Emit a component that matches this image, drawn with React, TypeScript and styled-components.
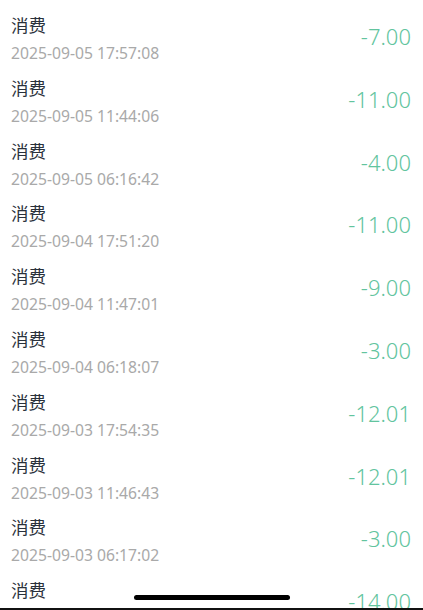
import React from 'react';
import styled, { createGlobalStyle } from 'styled-components';

// Global reset
const GlobalStyle = createGlobalStyle`
  html, body {
    margin: 0;
    padding: 0;
    background: #ffffff;
    overflow: hidden;
  }
  body {
    font-family: "Noto Sans", "Noto Sans CJK SC", sans-serif;
  }
`;

interface Record {
  title: string;
  time: string;
  amount: string;
}

const records: Record[] = [
  { title: '消费', time: '2025-09-05 17:57:08', amount: '-7.00' },
  { title: '消费', time: '2025-09-05 11:44:06', amount: '-11.00' },
  { title: '消费', time: '2025-09-05 06:16:42', amount: '-4.00' },
  { title: '消费', time: '2025-09-04 17:51:20', amount: '-11.00' },
  { title: '消费', time: '2025-09-04 11:47:01', amount: '-9.00' },
  { title: '消费', time: '2025-09-04 06:18:07', amount: '-3.00' },
  { title: '消费', time: '2025-09-03 17:54:35', amount: '-12.01' },
  { title: '消费', time: '2025-09-03 11:46:43', amount: '-12.01' },
  { title: '消费', time: '2025-09-03 06:17:02', amount: '-3.00' },
  { title: '消费', time: '2025-09-02 17:50:11', amount: '-14.00' },
];

// Styled components
const Screen = styled.div`
  position: relative;
  width: 423px;
  height: 610px;
  overflow: hidden;
  background: #ffffff;
`;

const List = styled.ul`
  list-style: none;
  margin: 0;
  padding: 0 11px;
`;

const Row = styled.li`
  display: flex;
  justify-content: space-between;
  align-items: flex-start;
  box-sizing: border-box;
  height: 62.8px;
  padding-top: 13px;
`;

const Info = styled.div`
  display: flex;
  flex-direction: column;
  gap: 6px;
`;

const Title = styled.span`
  font-family: "Noto Sans CJK SC", sans-serif;
  font-size: 17.5px;
  line-height: 24px;
  color: #2a313b;
`;

const Time = styled.span`
  font-size: 15.7px;
  line-height: 21px;
  color: #a9a9a9;
`;

const Amount = styled.span`
  margin-top: 9px;
  margin-right: 1px;
  font-size: 22px;
  font-weight: 300;
  line-height: 28px;
  color: #62c49e;
`;

const HomeIndicator = styled.div`
  position: absolute;
  left: 134px;
  bottom: 10px;
  width: 156px;
  height: 5px;
  border-radius: 3px;
  background: #000000;
`;

const BottomEdge = styled.div`
  position: absolute;
  left: 0;
  right: 0;
  bottom: 0;
  height: 2px;
  background: #111111;
`;

const App: React.FC = () => {
  return (
    <Screen>
      <GlobalStyle />
      <List>
        {records.map((r, i) => (
          <Row key={i}>
            <Info>
              <Title>{r.title}</Title>
              <Time>{r.time}</Time>
            </Info>
            <Amount>{r.amount}</Amount>
          </Row>
        ))}
      </List>
      <HomeIndicator />
      <BottomEdge />
    </Screen>
  );
};

export default App;
